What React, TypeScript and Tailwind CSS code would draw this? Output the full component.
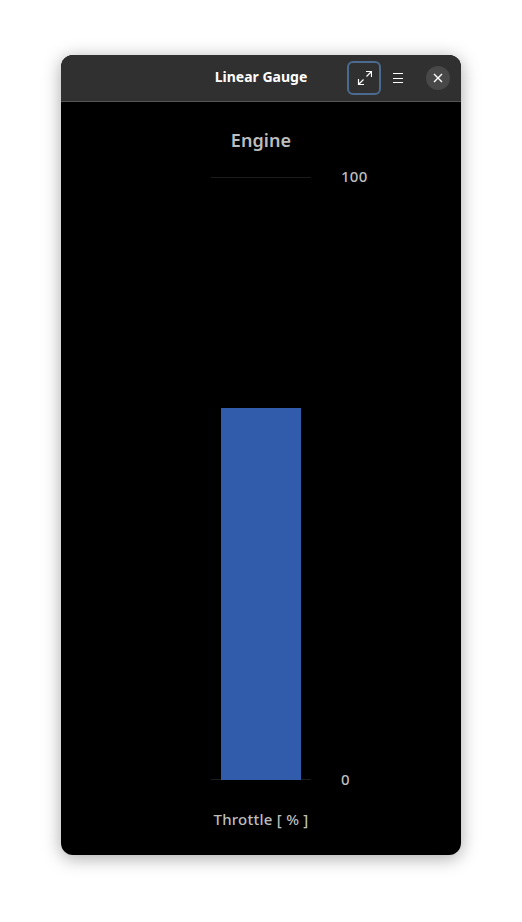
export default function App() {
  return (
    <div className="min-h-screen bg-white flex justify-center pt-[55px] font-['Noto_Sans',sans-serif]">
      <div className="w-[400px] h-[800px] rounded-[12px] overflow-hidden bg-black flex flex-col shadow-[0_3px_18px_rgba(0,0,0,0.35)]">
        <div className="relative h-[47px] shrink-0 bg-[#303030] border-b border-[#545454] flex items-center justify-end pr-[11px]">
          <h1 className="absolute inset-x-0 top-[12px] text-center text-white text-[14px] leading-[20px] font-bold">Linear Gauge</h1>
          <div className="relative flex items-center">
            <button className="w-[34px] h-[34px] rounded-[6px] border-2 border-[#4a6a8f] flex items-center justify-center text-white">
              <svg width="16" height="16" viewBox="0 0 16 16" fill="none" stroke="currentColor" strokeWidth="1.2">
                <path d="M10 1.5h5.5V7M15.5 1.5L10.5 6.5" />
                <path d="M2.5 9v5.5H8M2.5 14.5L7.5 9.5" />
              </svg>
            </button>
            <span className="w-[34px] flex justify-center text-white">
              <svg width="12" height="12" viewBox="0 0 12 12" stroke="currentColor" strokeWidth="1">
                <path d="M1 1.5h10M1 6.5h10M1 10.5h10" />
              </svg>
            </span>
            <span className="ml-[11px] w-[24px] h-[24px] rounded-full bg-[#484848] flex items-center justify-center text-white">
              <svg width="10" height="10" viewBox="0 0 10 10" stroke="currentColor" strokeWidth="1.4">
                <path d="M1 1l8 8M9 1l-8 8" />
              </svg>
            </span>
          </div>
        </div>
        <div className="flex-1 flex flex-col items-center">
          <h2 className="mt-[26px] h-[24px] text-[18px] leading-[24px] font-semibold tracking-[0.1px] text-[#bdbdbd]">Engine</h2>
          <div className="relative mt-[25px] w-[100px] h-[603px] border-y border-[#1c1c1c] px-[10px] flex flex-col justify-end">
            <div className="h-[372px] -mb-px bg-[#315bab]" />
            <div className="absolute left-[130px] -top-[12px] -bottom-[10px] flex flex-col justify-between text-[15px] leading-[20px] font-medium tracking-[0.25px] text-[#bdbdbd]">
              <span>100</span>
              <span>0</span>
            </div>
          </div>
          <p className="mt-[29px] text-[15px] leading-[20px] font-medium tracking-[0.25px] text-[#bdbdbd]">Throttle [ % ]</p>
        </div>
      </div>
    </div>
  );
}
